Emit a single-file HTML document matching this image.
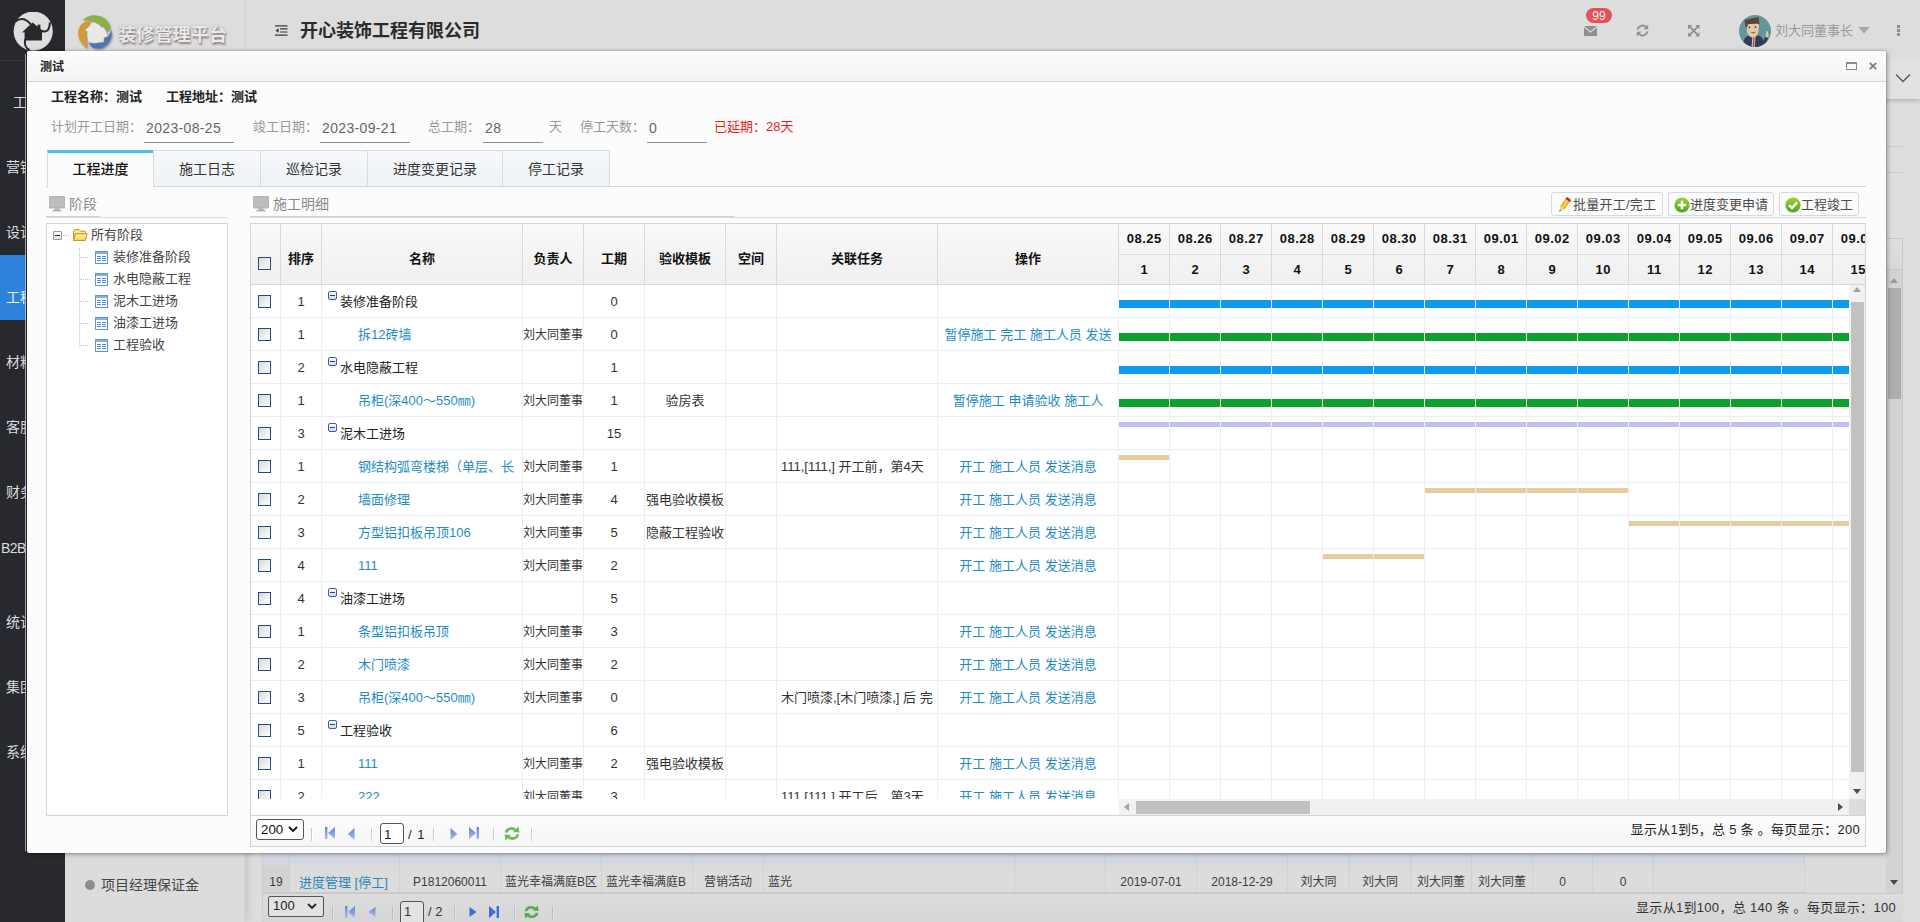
<!DOCTYPE html>
<html lang="zh-CN"><head><meta charset="utf-8"><title>装修管理平台</title>
<style>
*{box-sizing:border-box;margin:0;padding:0}
html,body{width:1920px;height:922px;overflow:hidden}
body{font-family:"Liberation Sans","Noto Sans CJK SC",sans-serif;font-size:13px;color:#333;background:#dddddd;position:relative}
a{text-decoration:none;color:#1e8cc4;cursor:pointer}
.abs{position:absolute}

/* ---------- underlying (dimmed) page ---------- */
#side1{z-index:3;position:absolute;left:0;top:0;width:65px;height:922px;background:#28292e;color:#dcdcde;font-size:14px}
#side1 .logo{position:absolute;left:0;top:0;width:65px;height:61px;border-bottom:1px solid #36373c}
#side1 .it{position:absolute;left:0;width:65px;height:65px;line-height:65px;text-align:left;padding-left:6px;white-space:nowrap;overflow:hidden}
#side1 .it.act{background:#2d83dc;color:#e8f0fa}
#side2{position:absolute;left:65px;top:0;width:180px;height:922px;background:#dcdcdc;border-right:1px solid #d6d6d6;box-shadow:2px 0 8px rgba(0,0,0,.12)}
#hdr{z-index:2;position:absolute;left:65px;top:0;width:1855px;height:60px;background:#dddddd}
#hdr .sep{position:absolute;left:180px;top:0;width:1px;height:60px;background:#d2d2d2}
#hdr .co{position:absolute;left:235px;top:17px;font-size:18px;font-weight:bold;color:#2b2b2b;line-height:28px;white-space:nowrap}
#hdr .brand{position:absolute;left:53px;top:19px;font-size:18px;font-weight:bold;color:#e9e9e9;letter-spacing:.2px;line-height:32px;white-space:nowrap;text-shadow:1px 2px 2px #8d8080,0 0 2px #a79d9d}
#tabsbar{z-index:1;position:absolute;left:245px;top:60px;width:1675px;height:39px;background:#e1e1e1;box-shadow:0 2px 4px rgba(0,0,0,.18)}
#under{position:absolute;left:245px;top:99px;width:1675px;height:823px;background:#dddddd}

/* ---------- modal ---------- */
#modal{z-index:10;position:absolute;left:27px;top:51px;width:1859px;height:802px;background:#fcfcfc;border-radius:2px;box-shadow:0 0 1px rgba(0,0,0,.55),1px 1px 5px rgba(0,0,0,.38)}
#modal .tb{position:absolute;left:0;top:0;width:1859px;height:31px;border-bottom:1px solid #d6d6d6;background:linear-gradient(#fdfdfd,#f3f3f3);border-radius:2px 2px 0 0}
#modal .tb .tt{position:absolute;left:13px;top:8px;font-size:12px;font-weight:bold;color:#222;line-height:16px}

.lbl{position:absolute;font-size:13px;color:#999;line-height:18px;white-space:nowrap}
.inp{position:absolute;font-size:14px;color:#666;line-height:18px;border-bottom:1px solid #8f8f8f;height:27px;padding:3px 0 0 2px;white-space:nowrap;letter-spacing:.34px}
.bold13{position:absolute;font-size:13px;font-weight:bold;color:#222;line-height:18px;white-space:nowrap}

/* tabs */
.tab{position:absolute;top:99px;height:37px;border:1px solid #d3dde4;border-bottom:1px solid #c9dbe7;background:linear-gradient(#f7f9fb,#edf2f5);font-size:14px;color:#333;text-align:center;line-height:36px}
.tab.on{background:#fcfcfc;border-top:3px solid #4fc0ee;border-bottom:0;line-height:33px;font-weight:500;color:#111}
.tabline{position:absolute;left:19px;top:135px;width:1820px;height:1px;background:#c9dbe7}

.sec{position:absolute;font-size:14px;color:#8a8a8a;line-height:20px;white-space:nowrap}
.hl1{position:absolute;height:1px;background:#dcdcdc}
.hl2{position:absolute;height:2px;background:#d0d0d0}

/* tree */
#tree{position:absolute;left:19px;top:172px;width:182px;height:593px;border:1px solid #d4d4d4;background:#fff}
#tree .n{position:absolute;font-size:13px;color:#444;line-height:18px;white-space:nowrap}

/* toolbar buttons */
.btn{position:absolute;top:141px;height:24px;border:1px solid #cfdbe4;border-radius:3px;background:#fbfbfb;font-size:13px;color:#4a4a4a;line-height:23px;white-space:nowrap}
.btn svg{position:absolute;top:3px}
.btn span{position:absolute;top:0}

/* grid */
#grid{position:absolute;left:223px;top:172px;width:1616px;height:624px;border:1px solid #d4d4d4;background:#fff;overflow:hidden}
#gh{position:absolute;left:0;top:0;width:1614px;height:61px;background:linear-gradient(#f9f9f9,#efefef);border-bottom:1px solid #d6d6d6}
#gh .h{position:absolute;top:0;height:60px;border-right:1px solid #d9d9d9;font-weight:bold;font-size:13px;color:#111;text-align:center;line-height:70px;white-space:nowrap}
#gh .gh1,#gh .gh2{position:absolute;left:868px;width:800px;height:30px;white-space:nowrap;font-size:0}
#gh .gh1{top:0;border-bottom:1px solid #dcdcdc;height:31px}
#gh .gh2{top:31px}
#gh .d{display:inline-block;width:51px;height:30px;border-right:1px solid #d9d9d9;font-size:13px;font-weight:bold;color:#111;text-align:center;line-height:30px;vertical-align:top;letter-spacing:.5px;padding-left:.5px}
#lb{position:absolute;left:0;top:61px;width:868px;height:514px;overflow:hidden}
#rb{position:absolute;left:868px;top:61px;width:730px;height:514px;overflow:hidden}
.r{position:absolute;left:0;width:868px;height:33px}
.c{position:absolute;top:0;height:33px;border-right:1px solid #eeeef0;border-bottom:1px solid #e8eef9;font-size:13px;color:#333;line-height:33px;text-align:center;white-space:nowrap;overflow:hidden}
.c0{left:0;width:30px}.c1{left:30px;width:41px}.c2{left:71px;width:201px;text-align:left}.c3{left:272px;width:61px;font-size:12px;line-height:35px}.c4{left:333px;width:61px}.c5{left:394px;width:81px}.c6{left:475px;width:51px}.c7{left:526px;width:161px;text-align:left;padding-left:4px}
.tk{display:block;width:152px;height:33px;overflow:hidden;white-space:nowrap}.c8{left:687px;width:181px}

.c2 .gn{position:absolute;left:18px;top:0;font-size:13px;color:#222}
.c2 .cn{position:absolute;left:36px;top:0;font-size:13px}
.exp{position:absolute;left:6px;top:6px;width:9px;height:9px;border:1px solid #3c5fa0;border-radius:2px;background:linear-gradient(#fff,#cfdcf3)}
.exp:after{content:"";position:absolute;left:1px;top:3px;width:5px;height:1px;background:#27408b}
.ck{position:absolute;left:7px;top:10px;width:13px;height:13px;border:1px solid #1f4c8f;background:linear-gradient(135deg,#d9d9d4,#fff)}
.grw{position:absolute;left:0;width:800px;height:33px;white-space:nowrap;font-size:0}
.grw .d{display:inline-block;position:relative;width:51px;height:33px;border-right:1px solid #eeeef0;border-bottom:1px solid #e8eef9;vertical-align:top}
.bar{position:absolute;left:0;width:50px;display:block}
.bar.b{top:15px;height:8px;background:#0e9aef}
.bar.g{top:15px;height:8px;background:#0aa12e}
.bar.p{top:5px;height:5px;background:#c1bef1}
.bar.t{top:5px;height:5px;background:#e6cd9f}

/* scrollbars */
.vsb{position:absolute;background:#f1f1f1}
.thumb{position:absolute;background:#c1c1c1}
.arr{position:absolute;width:0;height:0;border:4px solid transparent}

/* pager */
#pager{position:absolute;left:223px;top:764px;width:1616px;height:32px;border:1px solid #d4d4d4;background:linear-gradient(#fdfdfd,#f5f5f5);font-size:13px;color:#222}
#pager .sel{position:absolute;left:5px;top:3px;width:48px;height:21px;border:1px solid #555;border-radius:3px;background:#fff;font-size:13.33px;line-height:19px;padding-left:4px;color:#111}
#pager .ps{position:absolute;top:12px;width:1px;height:13px;background:#ccc;border-right:1px solid #fff;box-sizing:content-box}
#pager .pin{position:absolute;left:129px;top:7px;width:24px;height:21px;border:1px solid #555;border-radius:3px;background:#fff;font-size:13.33px;line-height:22px;padding-left:3px;color:#222}
#pager .info{position:absolute;right:5px;top:4px;line-height:20px;font-size:13px;color:#222;white-space:nowrap;letter-spacing:.28px}

/* header icons */
#hdr .un{position:absolute;left:1710px;top:21px;font-size:13px;color:#9a9a9a;line-height:20px;white-space:nowrap}
#hdr .badge{position:absolute;left:1521px;top:8px;width:26px;height:15px;border-radius:8px;background:#de5459;color:#f3eaea;font-size:12px;line-height:16px;text-align:center}
/* tree icons */
#tree svg{position:absolute}
#tree .vd{position:absolute;left:32px;top:24px;width:0;height:98px;border-left:1px dotted #c4c4c4}
#tree .hd{position:absolute;left:33px;width:10px;height:0;border-top:1px dotted #c4c4c4}
#pager svg{position:absolute}

/* underlying grid strip */
#ugrid{position:absolute;left:263px;top:853px;width:1640px;height:69px;background:#dcdcdc;border-left:1px solid #cdcdcd;margin-left:-1px;box-sizing:content-box}
#ugrid .uband{position:absolute;left:0;top:0;width:1542px;height:12px;background:#d3d8e3}
#ugrid .ub{position:absolute;top:0;height:12px;border-right:1px solid #c9cedb}
#ugrid .urow{position:absolute;left:0;top:12px;width:1542px;height:28px;border-bottom:1px solid #cbcbcb}
#ugrid .uc{position:absolute;top:0;height:27px;border-right:1px solid #d0d0d0;font-size:12px;color:#3c3c3c;line-height:35px;text-align:center;white-space:nowrap;overflow:hidden}
#ugrid .uc.rn{background:#d3d3d3}
#ugrid .uc.ul{text-align:left;padding-left:4px}
#ugrid .uc.u13{font-size:13px;padding-left:9px}
#ugrid .uc a{color:#2a86bd}
#upager{position:absolute;left:0;top:39px;width:1640px;height:30px;border-top:1px solid #c9c9c9;background:linear-gradient(#dddddd,#d6d6d6);font-size:13px;color:#333}
#upager svg{position:absolute}
#upager .sel{position:absolute;border:1px solid #555;border-radius:2px;background:#e2e2e2;font-size:13px;line-height:18px;padding-left:4px;color:#222}
#upager .pin{position:absolute;border:1px solid #555;border-radius:3px;background:#e2e2e2;font-size:13px;line-height:20px;padding-left:3px;color:#333}
#upager .ps{position:absolute;top:12px;width:1px;height:13px;background:#bcbcbc;border-right:1px solid #e6e6e6;box-sizing:content-box}
#upager .info{position:absolute;line-height:20px;font-size:13px;color:#333;white-space:nowrap;letter-spacing:.3px}

</style></head>
<body>
<svg width="0" height="0" style="position:absolute">
 <defs>
  <linearGradient id="fg" x1="0" y1="0" x2="0" y2="1"><stop offset="0" stop-color="#fff3b0"/><stop offset="1" stop-color="#f2cf4f"/></linearGradient>
  <linearGradient id="gg" x1="0" y1="0" x2="0" y2="1"><stop offset="0" stop-color="#9ad62c"/><stop offset="1" stop-color="#4da51f"/></linearGradient>
  <linearGradient id="pb" x1="0" y1="0" x2="0" y2="1"><stop offset="0" stop-color="#5f86d2"/><stop offset="1" stop-color="#a9bde6"/></linearGradient>
  <symbol id="ti" viewBox="0 0 13 13"><rect x=".5" y=".5" width="12" height="12" fill="#fff" stroke="#5b93dd"/><rect x="1" y="1" width="11" height="2" fill="#82b0ec"/><path d="M2 5.5h4M7 5.5h4M2 7.5h4M7 7.5h4M2 9.5h4M7 9.5h4" stroke="#4f8be0" stroke-width="1" fill="none"/></symbol>
  <symbol id="mon" viewBox="0 0 16 16"><rect x="0" y="0" width="16" height="12.5" rx="1" fill="#b4b4b4"/><rect x="1" y="1" width="14" height="10" fill="#bdbdbd"/><rect x="5.5" y="12.5" width="5" height="1.5" fill="#a5a5a5"/><rect x="3.5" y="14" width="9" height="1.5" fill="#b3b3b3"/><rect x="7" y="13.2" width="2" height="1" fill="#b9c49a"/></symbol>
 </defs>
</svg>
<!-- ======= dimmed underlying page ======= -->
<div id="under">
  <div class="abs" style="left:1641px;top:47px;width:17px;height:1px;background:#c3cdd4"></div>
  <div class="abs" style="left:1641px;top:73px;width:17px;height:1px;background:#c3cdd4"></div>
  <div class="abs" style="left:1641px;top:139px;width:17px;height:655px;background:#d3d3d3;border-right:1px solid #c6c6c6"></div>
  <div class="abs" style="left:1641px;top:139px;width:17px;height:32px;background:linear-gradient(#dfdfdf,#d8d8d8);border:1px solid #c8c8c8;border-left:0"></div>
  <div class="arr" style="left:1645px;top:179px;border-bottom:5px solid #9a9a9a;border-top:0"></div>
  <div class="abs" style="left:1643px;top:189px;width:13px;height:111px;background:#adadad"></div>
</div>
<div id="ugrid">
  <div class="uband"><div class="ub" style="left:0px;width:27px"></div><div class="ub" style="left:27px;width:110px"></div><div class="ub" style="left:137px;width:101px"></div><div class="ub" style="left:238px;width:101px"></div><div class="ub" style="left:339px;width:91px"></div><div class="ub" style="left:430px;width:71px"></div><div class="ub" style="left:501px;width:251px"></div><div class="ub" style="left:752px;width:91px"></div><div class="ub" style="left:843px;width:91px"></div><div class="ub" style="left:934px;width:91px"></div><div class="ub" style="left:1025px;width:62px"></div><div class="ub" style="left:1087px;width:61px"></div><div class="ub" style="left:1148px;width:61px"></div><div class="ub" style="left:1209px;width:61px"></div><div class="ub" style="left:1270px;width:60px"></div><div class="ub" style="left:1330px;width:61px"></div><div class="ub" style="left:1391px;width:151px"></div></div>
  <div class="urow"><div class="uc rn" style="left:0px;width:27px">19</div><div class="uc ul u13" style="left:27px;width:110px"><a>进度管理 [停工]</a></div><div class="uc" style="left:137px;width:101px">P1812060011</div><div class="uc ul" style="left:238px;width:101px">蓝光幸福满庭B区</div><div class="uc ul" style="left:339px;width:91px">蓝光幸福满庭B</div><div class="uc" style="left:430px;width:71px">营销活动</div><div class="uc ul" style="left:501px;width:251px">蓝光</div><div class="uc" style="left:752px;width:91px"></div><div class="uc" style="left:843px;width:91px">2019-07-01</div><div class="uc" style="left:934px;width:91px">2018-12-29</div><div class="uc" style="left:1025px;width:62px">刘大同</div><div class="uc" style="left:1087px;width:61px">刘大同</div><div class="uc" style="left:1148px;width:61px">刘大同董</div><div class="uc" style="left:1209px;width:61px">刘大同董</div><div class="uc" style="left:1270px;width:60px">0</div><div class="uc" style="left:1330px;width:61px">0</div><div class="uc" style="left:1391px;width:151px"></div></div>
  <div class="abs" style="left:1623px;top:0;width:17px;height:40px;background:#d3d3d3;border-right:1px solid #c6c6c6"><div class="arr" style="left:4px;top:27px;border-top:5px solid #4a4a4a;border-bottom:0"></div></div>
  <div id="upager" style="top:40px;height:29px">
    <div class="sel" style="left:5px;top:2px;width:56px;height:21px">100<svg style="right:6px;top:6px" width="10" height="7" viewBox="0 0 10 7"><path d="M1 1 L5 5 L9 1" fill="none" stroke="#222" stroke-width="1.8"/></svg></div>
    <div class="ps" style="left:69px"></div>
    <svg style="left:81px;top:12px" width="12" height="12" viewBox="0 0 12 12"><rect x="1" y="0" width="2.4" height="12" fill="url(#pb)"/><path d="M11 0 L11 12 L4 6 Z" fill="url(#pb)"/></svg>
    <svg style="left:104px;top:13px" width="9" height="10" viewBox="0 0 9 10"><path d="M8.5 0 L8.5 10 L1.5 5 Z" fill="url(#pb)"/></svg>
    <div class="ps" style="left:129px"></div>
    <div class="pin" style="left:137px;top:7px;width:24px;height:24px">1</div>
    <div class="abs" style="left:165px;top:8px;line-height:20px;font-size:13px">/ 2</div>
    <div class="ps" style="left:191px"></div>
    <svg style="left:206px;top:13px" width="9" height="10" viewBox="0 0 9 10"><path d="M.5 0 L.5 10 L7.5 5 Z" fill="#3c6fd6"/></svg>
    <svg style="left:225px;top:12px" width="12" height="12" viewBox="0 0 12 12"><path d="M1 0 L1 12 L8 6 Z" fill="#3c6fd6"/><rect x="8.6" y="0" width="2.4" height="12" fill="#3c6fd6"/></svg>
    <div class="ps" style="left:251px"></div>
    <svg style="left:260px;top:10px" width="17" height="16" viewBox="0 0 17 16"><g fill="none" stroke="#5aa653" stroke-width="2.6"><path d="M3 7.2 C3.5 3.2 9 2.2 11.8 4.6"/><path d="M14 8.8 C13.5 12.8 8 13.8 5.2 11.4"/></g><path d="M9.6 6.6 L15.6 7 L14.6 1.4 Z" fill="#5aa653"/><path d="M7.4 9.4 L1.4 9 L2.4 14.6 Z" fill="#5aa653"/></svg>
    <div class="ps" style="left:289px"></div>
    <div class="info" style="right:7px;top:4px">显示从1到100，总 140 条 。每页显示：100</div>
  </div>
</div>
<div id="tabsbar">
  <svg class="abs" style="left:1650px;top:13px" width="16" height="10" viewBox="0 0 16 10"><path d="M1 1.5 L8 8.5 L15 1.5" fill="none" stroke="#3d5a78" stroke-width="1.3"/></svg>
</div>
<div id="hdr">
  <div class="sep"></div>
  <!-- colour swirl logo -->
  <svg class="abs" style="left:10px;top:12px" width="42" height="42" viewBox="0 0 42 42">
    <defs><filter id="ls" x="-20%" y="-20%" width="140%" height="140%"><feDropShadow dx="1" dy="1.2" stdDeviation=".9" flood-color="#6f5d5d" flood-opacity=".75"/></filter></defs>
    <g filter="url(#ls)">
      <path d="M7.6 8.4 Q13 2.6 21.5 3.4 Q31.5 4.6 34.6 13.6 Q35.4 16.4 34.4 18.6 L31.2 18.4 L29 14.8 L27.2 15.2 L24.4 12.4 L20.2 10 L17.4 9.2 Q12 7.4 7.6 8.4 Z" fill="#8db13f"/>
      <path d="M36.6 18.2 Q37.8 26.6 32.2 32.4 Q25.6 38.6 17.4 35.6 Q14.8 34.2 14.2 30.8 Q18.6 32.6 23 31 L29 30.6 L29.4 26.2 L33 24.4 Z" fill="#4a78b5"/>
      <path d="M12.6 36.2 Q4.4 31.4 3.2 22.4 Q2.6 14.4 9.2 10.2 Q13 9.2 15.8 10.6 L13.6 14 L8.8 18.2 L11.4 19.6 Q10.4 27.6 12.6 36.2 Z" fill="#d29a36"/>
      <path d="M19.8 10.6 L24 13 L26.8 15.8 L28.6 15.4 L30.6 18.8 L32.4 24 L28.8 25.8 L28.4 30 L22.8 30.4 Q17.6 32 13.6 29.6 Q11.8 24 12.6 19.2 L9.8 18.2 L14.2 14.4 L16.4 11 Z" fill="#e9e9e9"/>
    </g>
  </svg>
  <div class="brand">装修管理平台</div>
  <!-- fold icon -->
  <svg class="abs" style="left:210px;top:25px" width="13" height="11" viewBox="0 0 13 11"><path d="M0 .8h12.5M5 3.9h7.5M5 7h7.5M0 10.1h12.5" stroke="#3a3a3a" stroke-width="1.2" fill="none"/><path d="M3.6 3.2 L3.6 7.8 L.4 5.5 Z" fill="#3a3a3a"/></svg>
  <div class="co">开心装饰工程有限公司</div>
  <!-- mail -->
  <svg class="abs" style="left:1519px;top:26px" width="13" height="10" viewBox="0 0 13 10"><path d="M0 0 L13 0 L6.5 5.2 Z" fill="#8f8f8f"/><path d="M0 1.6 L6.5 6.8 L13 1.6 L13 10 L0 10 Z" fill="#8f8f8f"/></svg>
  <div class="badge">99</div>
  <!-- refresh -->
  <svg class="abs" style="left:1571px;top:24px" width="13" height="13" viewBox="0 0 13 13"><g fill="none" stroke="#8f8f8f" stroke-width="1.9"><path d="M1.6 5.6 A5 5 0 0 1 10 3"/><path d="M11.4 7.4 A5 5 0 0 1 3 10"/></g><path d="M12.2 .6 L12.2 5.2 L7.6 5.2 Z" fill="#8f8f8f"/><path d="M.8 12.4 L.8 7.8 L5.4 7.8 Z" fill="#8f8f8f"/></svg>
  <!-- fullscreen -->
  <svg class="abs" style="left:1623px;top:25px" width="11.5" height="11.5" viewBox="0 0 12 12"><path d="M2 2 L10 10 M10 2 L2 10" stroke="#8f8f8f" stroke-width="1.8" fill="none"/><path d="M0 0h4.4L0 4.4zM12 0v4.4L7.6 0zM0 12V7.6L4.4 12zM12 12H7.6L12 7.6z" fill="#8f8f8f"/></svg>
  <!-- avatar -->
  <svg class="abs" style="left:1674px;top:15px" width="32" height="32" viewBox="0 0 32 32">
    <defs><clipPath id="av"><circle cx="16" cy="16" r="16"/></clipPath></defs>
    <g clip-path="url(#av)">
      <rect width="32" height="32" fill="#63979a"/>
      <path d="M3 32 L5 25 Q6 21 11 20.5 L19 20.5 Q23 21 24 25 L25 32 Z" fill="#353d54"/>
      <path d="M13.5 20.5 L16.5 20.5 L15.8 32 L12.6 32 Z" fill="#d8d2c8"/>
      <path d="M14.4 21.5 L15.6 21.5 L15.2 32 L13.6 32 Z" fill="#b4453f"/>
      <path d="M23 27 L27.5 21 L29.5 22.5 L26 30 Z" fill="#353d54"/>
      <path d="M26.6 21.8 L27.2 16 L28.8 16.2 L29.6 20 L29.4 23 Z" fill="#ddc3a2"/>
      <path d="M7.5 9 L8 17 Q10 22.5 14 22.5 Q18.5 22 19.5 16 L20 8.5 Z" fill="#e0c9a8"/>
      <path d="M5.5 5 L19.5 2 L20.5 9.5 L17.5 8.5 L9 9.2 L8 12.5 L6.5 12 Z" fill="#5a4335"/>
      <rect x="9.6" y="11.6" width="1.6" height="1.8" rx=".8" fill="#3a2f2a"/><rect x="15.6" y="11.2" width="1.6" height="1.8" rx=".8" fill="#3a2f2a"/>
      <path d="M11.5 17.2 Q14.5 19.4 17.2 16.6 Q14.5 17.6 11.5 17.2Z" fill="#8c3b3b"/>
    </g>
  </svg>
  <div class="un">刘大同董事长</div>
  <svg class="abs" style="left:1793px;top:27px" width="12" height="7" viewBox="0 0 12 7"><path d="M0 0 L12 0 L6 6.4 Z" fill="#a8a8a8"/></svg>
  <svg class="abs" style="left:1832px;top:25px" width="3" height="11" viewBox="0 0 3 11"><rect x="0" y="0" width="3" height="3" fill="#8f8f8f"/><rect x="0" y="4" width="3" height="3" fill="#8f8f8f"/><rect x="0" y="8" width="3" height="3" fill="#8f8f8f"/></svg>
</div>
<div id="side2">
  <div class="abs" style="left:20px;top:880px;width:10px;height:10px;border-radius:5px;background:#8c8e93"></div>
  <div class="abs" style="left:36px;top:875px;font-size:14px;color:#464646;line-height:20px;white-space:nowrap">项目经理保证金</div>
</div>
<div id="side1">
  <div class="logo">
    <svg class="abs" style="left:13px;top:12px" width="41" height="41" viewBox="0 0 41 41">
      <circle cx="20.2" cy="19.2" r="19.6" fill="#dedede"/>
      <path d="M19.6 10.6 L31.6 20.2 L29 20.2 L29 28.6 L11.6 28.6 L11.6 20.2 L8.8 20.4 Z" fill="#28292e"/>
      <rect x="24.6" y="12.6" width="2.8" height="4.6" fill="#28292e"/>
      <g fill="none" stroke="#28292e" stroke-width="2">
        <path d="M2.4 9.4 Q10.4 3.4 17.8 12.4"/>
        <path d="M28.6 18.8 Q36.6 21.8 36.8 10.6"/>
        <path d="M12.2 27 Q10.6 35.4 16.6 38"/>
      </g>
    </svg>
  </div>
  <div class="it" style="top:70px;padding-left:13px">工作台</div>
  <div class="it" style="top:135px">营销管理</div>
  <div class="it" style="top:200px">设计管理</div>
  <div class="it act" style="top:255px;height:65px;padding-top:10px">工程管理</div>
  <div class="it" style="top:330px">材料管理</div>
  <div class="it" style="top:395px">客服管理</div>
  <div class="it" style="top:460px">财务管理</div>
  <div class="it" style="top:516px;text-align:left;padding-left:1px;font-size:14px;letter-spacing:-.6px">B2B 平台</div>
  <div class="it" style="top:590px">统计分析</div>
  <div class="it" style="top:655px">集团管理</div>
  <div class="it" style="top:720px">系统管理</div>
</div>

<!-- ======= modal window ======= -->
<div id="modal">
  <div class="abs" style="left:-2px;top:3px;width:1px;height:797px;background:rgba(200,200,200,.75)"></div><div class="abs" style="left:-1px;top:1px;width:1px;height:800px;background:#26262a"></div>
  <div class="tb"><div class="tt">测试</div><svg class="abs" style="left:1819px;top:11px" width="12" height="9" viewBox="0 0 12 9"><rect x=".5" y=".5" width="10" height="7" fill="none" stroke="#8c8c8c" stroke-width="1"/><rect x="0" y="0" width="11" height="2" fill="#8c8c8c"/></svg><svg class="abs" style="left:1842px;top:11px" width="8" height="8" viewBox="0 0 8 8"><path d="M.8 .8 L7.2 7.2 M7.2 .8 L.8 7.2" stroke="#7c7c7c" stroke-width="1.7" fill="none"/></svg></div>

  <div class="bold13" style="left:24px;top:37px">工程名称：测试</div>
  <div class="bold13" style="left:139px;top:37px">工程地址：测试</div>

  <div class="lbl" style="left:24px;top:67px">计划开工日期：</div>
  <div class="inp" style="left:117px;top:65px;width:90px">2023-08-25</div>
  <div class="lbl" style="left:226px;top:67px">竣工日期：</div>
  <div class="inp" style="left:293px;top:65px;width:90px">2023-09-21</div>
  <div class="lbl" style="left:401px;top:67px">总工期：</div>
  <div class="inp" style="left:456px;top:65px;width:60px">28</div>
  <div class="lbl" style="left:522px;top:67px">天</div>
  <div class="lbl" style="left:553px;top:67px">停工天数：</div>
  <div class="inp" style="left:620px;top:65px;width:60px">0</div>
  <div class="abs" style="left:687px;top:67px;font-size:13px;color:#f9161b;line-height:18px;white-space:nowrap">已延期：28天</div>

  <div class="tabline"></div>
  <div class="tab on" style="left:20px;width:107px">工程进度</div>
  <div class="tab" style="left:126px;width:108px">施工日志</div>
  <div class="tab" style="left:233px;width:108px">巡检记录</div>
  <div class="tab" style="left:340px;width:136px">进度变更记录</div>
  <div class="tab" style="left:475px;width:108px">停工记录</div>

  <!-- section: 阶段 -->
  <svg class="abs" style="left:22px;top:145px" width="16" height="16"><use href="#mon"/></svg>
  <div class="sec" style="left:42px;top:143px">阶段</div>
  <div class="hl2" style="left:19px;top:165px;width:54px"></div>
  <div class="hl1" style="left:19px;top:166px;width:181px"></div>

  <div id="tree">
    <div class="abs" style="left:6px;top:7px;width:9px;height:9px;border:1px solid #9a9a9a;border-radius:1px;background:linear-gradient(#fff,#e4e4e4)"></div>
    <div class="abs" style="left:8px;top:11px;width:5px;height:1px;background:#222"></div>
    <div class="abs" style="left:16px;top:11px;width:6px;height:0;border-top:1px dotted #bdbdbd"></div>
    <svg style="left:25px;top:4px" width="16" height="14" viewBox="0 0 16 14"><path d="M1.5 4 Q1.5 1.5 4 1.5 L7 1.5 L8.5 3.2 L12.5 3.2 Q13.7 3.2 13.7 4.4 L13.7 6 L3.5 6 L1.5 11 Z" fill="#f8e59a" stroke="#c8961b" stroke-width="1"/><path d="M3.6 5.8 L15.2 5.8 L13.4 12.5 L1.5 12.5 Z" fill="url(#fg)" stroke="#c8961b" stroke-width="1" stroke-linejoin="round"/></svg>
    <div class="n" style="left:44px;top:2px">所有阶段</div>
    <div class="vd"></div>
    <div class="hd" style="top:33px"></div><div class="hd" style="top:55px"></div><div class="hd" style="top:77px"></div><div class="hd" style="top:99px"></div><div class="hd" style="top:121px"></div>
    <svg style="left:48px;top:27px" width="13" height="13"><use href="#ti"/></svg>
    <svg style="left:48px;top:49px" width="13" height="13"><use href="#ti"/></svg>
    <svg style="left:48px;top:71px" width="13" height="13"><use href="#ti"/></svg>
    <svg style="left:48px;top:93px" width="13" height="13"><use href="#ti"/></svg>
    <svg style="left:48px;top:115px" width="13" height="13"><use href="#ti"/></svg>
    <div class="n" style="left:66px;top:24px">装修准备阶段</div>
    <div class="n" style="left:66px;top:46px">水电隐蔽工程</div>
    <div class="n" style="left:66px;top:68px">泥木工进场</div>
    <div class="n" style="left:66px;top:90px">油漆工进场</div>
    <div class="n" style="left:66px;top:112px">工程验收</div>
  </div>

  <!-- section: 施工明细 -->
  <svg class="abs" style="left:226px;top:145px" width="16" height="16"><use href="#mon"/></svg>
  <div class="sec" style="left:246px;top:143px">施工明细</div>
  <div class="hl2" style="left:223px;top:165px;width:485px"></div>
  <div class="hl1" style="left:223px;top:166px;width:1616px"></div>

  <div class="btn" style="left:1524px;width:112px"><svg style="left:5px;top:4px" width="14" height="16" viewBox="0 0 14 16"><g transform="rotate(36 7 8) translate(7 8) scale(1.12 1.04) translate(-7 -8)"><rect x="4.8" y="0" width="4.8" height="2.8" rx=".8" fill="#c9252d"/><rect x="4.8" y="2.6" width="4.8" height="8.6" fill="#efb02b"/><rect x="6.3" y="2.6" width="1.7" height="8.6" fill="#f8d264"/><path d="M4.8 11.2 L9.6 11.2 L7.2 15.6 Z" fill="#e8cfa2"/><path d="M6.5 14.2 L7.9 14.2 L7.2 15.8 Z" fill="#2b2b2b"/></g></svg><span style="left:21px;letter-spacing:.25px">批量开工/完工</span></div>
  <div class="btn" style="left:1641px;width:106px"><svg style="left:5px;top:4px" width="16" height="16" viewBox="0 0 16 16"><circle cx="8" cy="8" r="7.6" fill="url(#gg)"/><path d="M8 3.8v8.4M3.8 8h8.4" stroke="#fff" stroke-width="2.4" fill="none"/></svg><span style="left:21px">进度变更申请</span></div>
  <div class="btn" style="left:1752px;width:80px"><svg style="left:5px;top:4px" width="16" height="16" viewBox="0 0 16 16"><circle cx="8" cy="8" r="7.6" fill="url(#gg)"/><path d="M4 8.2 L7 11 L12 5.4" stroke="#fff" stroke-width="2.4" fill="none"/></svg><span style="left:21px">工程竣工</span></div>

  <div id="grid">
    <div id="gh">
      <div class="h" style="left:0;width:30px"><span class="ck" style="top:33px"></span></div>
      <div class="h" style="left:30px;width:41px">排序</div>
      <div class="h" style="left:71px;width:201px">名称</div>
      <div class="h" style="left:272px;width:61px">负责人</div>
      <div class="h" style="left:333px;width:61px">工期</div>
      <div class="h" style="left:394px;width:81px">验收模板</div>
      <div class="h" style="left:475px;width:51px">空间</div>
      <div class="h" style="left:526px;width:161px">关联任务</div>
      <div class="h" style="left:687px;width:181px">操作</div>
      <div class="gh1"><div class="d">08.25</div><div class="d">08.26</div><div class="d">08.27</div><div class="d">08.28</div><div class="d">08.29</div><div class="d">08.30</div><div class="d">08.31</div><div class="d">09.01</div><div class="d">09.02</div><div class="d">09.03</div><div class="d">09.04</div><div class="d">09.05</div><div class="d">09.06</div><div class="d">09.07</div><div class="d">09.08</div></div><div class="gh2"><div class="d">1</div><div class="d">2</div><div class="d">3</div><div class="d">4</div><div class="d">5</div><div class="d">6</div><div class="d">7</div><div class="d">8</div><div class="d">9</div><div class="d">10</div><div class="d">11</div><div class="d">12</div><div class="d">13</div><div class="d">14</div><div class="d">15</div></div>
    </div>
    <div id="lb">
<div class="r" style="top:0px"><div class="c c0"><span class="ck"></span></div><div class="c c1">1</div><div class="c c2"><span class="exp"></span><span class="gn">装修准备阶段</span></div><div class="c c3"></div><div class="c c4">0</div><div class="c c5"></div><div class="c c6"></div><div class="c c7"><span class="tk"></span></div><div class="c c8"></div></div>
<div class="r" style="top:33px"><div class="c c0"><span class="ck"></span></div><div class="c c1">1</div><div class="c c2"><a class="cn">拆12砖墙</a></div><div class="c c3">刘大同董事</div><div class="c c4">0</div><div class="c c5"></div><div class="c c6"></div><div class="c c7"><span class="tk"></span></div><div class="c c8"><a>暂停施工</a> <a>完工</a> <a>施工人员</a> <a>发送</a></div></div>
<div class="r" style="top:66px"><div class="c c0"><span class="ck"></span></div><div class="c c1">2</div><div class="c c2"><span class="exp"></span><span class="gn">水电隐蔽工程</span></div><div class="c c3"></div><div class="c c4">1</div><div class="c c5"></div><div class="c c6"></div><div class="c c7"><span class="tk"></span></div><div class="c c8"></div></div>
<div class="r" style="top:99px"><div class="c c0"><span class="ck"></span></div><div class="c c1">1</div><div class="c c2"><a class="cn">吊柜(深400～550㎜)</a></div><div class="c c3">刘大同董事</div><div class="c c4">1</div><div class="c c5">验房表</div><div class="c c6"></div><div class="c c7"><span class="tk"></span></div><div class="c c8"><a>暂停施工</a> <a>申请验收</a> <a>施工人</a></div></div>
<div class="r" style="top:132px"><div class="c c0"><span class="ck"></span></div><div class="c c1">3</div><div class="c c2"><span class="exp"></span><span class="gn">泥木工进场</span></div><div class="c c3"></div><div class="c c4">15</div><div class="c c5"></div><div class="c c6"></div><div class="c c7"><span class="tk"></span></div><div class="c c8"></div></div>
<div class="r" style="top:165px"><div class="c c0"><span class="ck"></span></div><div class="c c1">1</div><div class="c c2"><a class="cn">钢结构弧弯楼梯（单层、长</a></div><div class="c c3">刘大同董事</div><div class="c c4">1</div><div class="c c5"></div><div class="c c6"></div><div class="c c7"><span class="tk">111,[111,] 开工前，第4天</span></div><div class="c c8"><a>开工</a> <a>施工人员</a> <a>发送消息</a></div></div>
<div class="r" style="top:198px"><div class="c c0"><span class="ck"></span></div><div class="c c1">2</div><div class="c c2"><a class="cn">墙面修理</a></div><div class="c c3">刘大同董事</div><div class="c c4">4</div><div class="c c5">强电验收模板</div><div class="c c6"></div><div class="c c7"><span class="tk"></span></div><div class="c c8"><a>开工</a> <a>施工人员</a> <a>发送消息</a></div></div>
<div class="r" style="top:231px"><div class="c c0"><span class="ck"></span></div><div class="c c1">3</div><div class="c c2"><a class="cn">方型铝扣板吊顶106</a></div><div class="c c3">刘大同董事</div><div class="c c4">5</div><div class="c c5">隐蔽工程验收</div><div class="c c6"></div><div class="c c7"><span class="tk"></span></div><div class="c c8"><a>开工</a> <a>施工人员</a> <a>发送消息</a></div></div>
<div class="r" style="top:264px"><div class="c c0"><span class="ck"></span></div><div class="c c1">4</div><div class="c c2"><a class="cn">111</a></div><div class="c c3">刘大同董事</div><div class="c c4">2</div><div class="c c5"></div><div class="c c6"></div><div class="c c7"><span class="tk"></span></div><div class="c c8"><a>开工</a> <a>施工人员</a> <a>发送消息</a></div></div>
<div class="r" style="top:297px"><div class="c c0"><span class="ck"></span></div><div class="c c1">4</div><div class="c c2"><span class="exp"></span><span class="gn">油漆工进场</span></div><div class="c c3"></div><div class="c c4">5</div><div class="c c5"></div><div class="c c6"></div><div class="c c7"><span class="tk"></span></div><div class="c c8"></div></div>
<div class="r" style="top:330px"><div class="c c0"><span class="ck"></span></div><div class="c c1">1</div><div class="c c2"><a class="cn">条型铝扣板吊顶</a></div><div class="c c3">刘大同董事</div><div class="c c4">3</div><div class="c c5"></div><div class="c c6"></div><div class="c c7"><span class="tk"></span></div><div class="c c8"><a>开工</a> <a>施工人员</a> <a>发送消息</a></div></div>
<div class="r" style="top:363px"><div class="c c0"><span class="ck"></span></div><div class="c c1">2</div><div class="c c2"><a class="cn">木门喷漆</a></div><div class="c c3">刘大同董事</div><div class="c c4">2</div><div class="c c5"></div><div class="c c6"></div><div class="c c7"><span class="tk"></span></div><div class="c c8"><a>开工</a> <a>施工人员</a> <a>发送消息</a></div></div>
<div class="r" style="top:396px"><div class="c c0"><span class="ck"></span></div><div class="c c1">3</div><div class="c c2"><a class="cn">吊柜(深400～550㎜)</a></div><div class="c c3">刘大同董事</div><div class="c c4">0</div><div class="c c5"></div><div class="c c6"></div><div class="c c7"><span class="tk">木门喷漆,[木门喷漆,] 后 完</span></div><div class="c c8"><a>开工</a> <a>施工人员</a> <a>发送消息</a></div></div>
<div class="r" style="top:429px"><div class="c c0"><span class="ck"></span></div><div class="c c1">5</div><div class="c c2"><span class="exp"></span><span class="gn">工程验收</span></div><div class="c c3"></div><div class="c c4">6</div><div class="c c5"></div><div class="c c6"></div><div class="c c7"><span class="tk"></span></div><div class="c c8"></div></div>
<div class="r" style="top:462px"><div class="c c0"><span class="ck"></span></div><div class="c c1">1</div><div class="c c2"><a class="cn">111</a></div><div class="c c3">刘大同董事</div><div class="c c4">2</div><div class="c c5">强电验收模板</div><div class="c c6"></div><div class="c c7"><span class="tk"></span></div><div class="c c8"><a>开工</a> <a>施工人员</a> <a>发送消息</a></div></div>
<div class="r" style="top:495px"><div class="c c0"><span class="ck"></span></div><div class="c c1">2</div><div class="c c2"><a class="cn">222</a></div><div class="c c3">刘大同董事</div><div class="c c4">3</div><div class="c c5"></div><div class="c c6"></div><div class="c c7"><span class="tk">111,[111,] 开工后，第3天</span></div><div class="c c8"><a>开工</a> <a>施工人员</a> <a>发送消息</a></div></div>
    </div>
    <div id="rb">
<div class="grw" style="top:0px"><div class="d"><i class="bar b"></i></div><div class="d"><i class="bar b"></i></div><div class="d"><i class="bar b"></i></div><div class="d"><i class="bar b"></i></div><div class="d"><i class="bar b"></i></div><div class="d"><i class="bar b"></i></div><div class="d"><i class="bar b"></i></div><div class="d"><i class="bar b"></i></div><div class="d"><i class="bar b"></i></div><div class="d"><i class="bar b"></i></div><div class="d"><i class="bar b"></i></div><div class="d"><i class="bar b"></i></div><div class="d"><i class="bar b"></i></div><div class="d"><i class="bar b"></i></div><div class="d"><i class="bar b"></i></div></div>
<div class="grw" style="top:33px"><div class="d"><i class="bar g"></i></div><div class="d"><i class="bar g"></i></div><div class="d"><i class="bar g"></i></div><div class="d"><i class="bar g"></i></div><div class="d"><i class="bar g"></i></div><div class="d"><i class="bar g"></i></div><div class="d"><i class="bar g"></i></div><div class="d"><i class="bar g"></i></div><div class="d"><i class="bar g"></i></div><div class="d"><i class="bar g"></i></div><div class="d"><i class="bar g"></i></div><div class="d"><i class="bar g"></i></div><div class="d"><i class="bar g"></i></div><div class="d"><i class="bar g"></i></div><div class="d"><i class="bar g"></i></div></div>
<div class="grw" style="top:66px"><div class="d"><i class="bar b"></i></div><div class="d"><i class="bar b"></i></div><div class="d"><i class="bar b"></i></div><div class="d"><i class="bar b"></i></div><div class="d"><i class="bar b"></i></div><div class="d"><i class="bar b"></i></div><div class="d"><i class="bar b"></i></div><div class="d"><i class="bar b"></i></div><div class="d"><i class="bar b"></i></div><div class="d"><i class="bar b"></i></div><div class="d"><i class="bar b"></i></div><div class="d"><i class="bar b"></i></div><div class="d"><i class="bar b"></i></div><div class="d"><i class="bar b"></i></div><div class="d"><i class="bar b"></i></div></div>
<div class="grw" style="top:99px"><div class="d"><i class="bar g"></i></div><div class="d"><i class="bar g"></i></div><div class="d"><i class="bar g"></i></div><div class="d"><i class="bar g"></i></div><div class="d"><i class="bar g"></i></div><div class="d"><i class="bar g"></i></div><div class="d"><i class="bar g"></i></div><div class="d"><i class="bar g"></i></div><div class="d"><i class="bar g"></i></div><div class="d"><i class="bar g"></i></div><div class="d"><i class="bar g"></i></div><div class="d"><i class="bar g"></i></div><div class="d"><i class="bar g"></i></div><div class="d"><i class="bar g"></i></div><div class="d"><i class="bar g"></i></div></div>
<div class="grw" style="top:132px"><div class="d"><i class="bar p"></i></div><div class="d"><i class="bar p"></i></div><div class="d"><i class="bar p"></i></div><div class="d"><i class="bar p"></i></div><div class="d"><i class="bar p"></i></div><div class="d"><i class="bar p"></i></div><div class="d"><i class="bar p"></i></div><div class="d"><i class="bar p"></i></div><div class="d"><i class="bar p"></i></div><div class="d"><i class="bar p"></i></div><div class="d"><i class="bar p"></i></div><div class="d"><i class="bar p"></i></div><div class="d"><i class="bar p"></i></div><div class="d"><i class="bar p"></i></div><div class="d"><i class="bar p"></i></div></div>
<div class="grw" style="top:165px"><div class="d"><i class="bar t"></i></div><div class="d"></div><div class="d"></div><div class="d"></div><div class="d"></div><div class="d"></div><div class="d"></div><div class="d"></div><div class="d"></div><div class="d"></div><div class="d"></div><div class="d"></div><div class="d"></div><div class="d"></div><div class="d"></div></div>
<div class="grw" style="top:198px"><div class="d"></div><div class="d"></div><div class="d"></div><div class="d"></div><div class="d"></div><div class="d"></div><div class="d"><i class="bar t"></i></div><div class="d"><i class="bar t"></i></div><div class="d"><i class="bar t"></i></div><div class="d"><i class="bar t"></i></div><div class="d"></div><div class="d"></div><div class="d"></div><div class="d"></div><div class="d"></div></div>
<div class="grw" style="top:231px"><div class="d"></div><div class="d"></div><div class="d"></div><div class="d"></div><div class="d"></div><div class="d"></div><div class="d"></div><div class="d"></div><div class="d"></div><div class="d"></div><div class="d"><i class="bar t"></i></div><div class="d"><i class="bar t"></i></div><div class="d"><i class="bar t"></i></div><div class="d"><i class="bar t"></i></div><div class="d"><i class="bar t"></i></div></div>
<div class="grw" style="top:264px"><div class="d"></div><div class="d"></div><div class="d"></div><div class="d"></div><div class="d"><i class="bar t"></i></div><div class="d"><i class="bar t"></i></div><div class="d"></div><div class="d"></div><div class="d"></div><div class="d"></div><div class="d"></div><div class="d"></div><div class="d"></div><div class="d"></div><div class="d"></div></div>
<div class="grw" style="top:297px"><div class="d"></div><div class="d"></div><div class="d"></div><div class="d"></div><div class="d"></div><div class="d"></div><div class="d"></div><div class="d"></div><div class="d"></div><div class="d"></div><div class="d"></div><div class="d"></div><div class="d"></div><div class="d"></div><div class="d"></div></div>
<div class="grw" style="top:330px"><div class="d"></div><div class="d"></div><div class="d"></div><div class="d"></div><div class="d"></div><div class="d"></div><div class="d"></div><div class="d"></div><div class="d"></div><div class="d"></div><div class="d"></div><div class="d"></div><div class="d"></div><div class="d"></div><div class="d"></div></div>
<div class="grw" style="top:363px"><div class="d"></div><div class="d"></div><div class="d"></div><div class="d"></div><div class="d"></div><div class="d"></div><div class="d"></div><div class="d"></div><div class="d"></div><div class="d"></div><div class="d"></div><div class="d"></div><div class="d"></div><div class="d"></div><div class="d"></div></div>
<div class="grw" style="top:396px"><div class="d"></div><div class="d"></div><div class="d"></div><div class="d"></div><div class="d"></div><div class="d"></div><div class="d"></div><div class="d"></div><div class="d"></div><div class="d"></div><div class="d"></div><div class="d"></div><div class="d"></div><div class="d"></div><div class="d"></div></div>
<div class="grw" style="top:429px"><div class="d"></div><div class="d"></div><div class="d"></div><div class="d"></div><div class="d"></div><div class="d"></div><div class="d"></div><div class="d"></div><div class="d"></div><div class="d"></div><div class="d"></div><div class="d"></div><div class="d"></div><div class="d"></div><div class="d"></div></div>
<div class="grw" style="top:462px"><div class="d"></div><div class="d"></div><div class="d"></div><div class="d"></div><div class="d"></div><div class="d"></div><div class="d"></div><div class="d"></div><div class="d"></div><div class="d"></div><div class="d"></div><div class="d"></div><div class="d"></div><div class="d"></div><div class="d"></div></div>
<div class="grw" style="top:495px"><div class="d"></div><div class="d"></div><div class="d"></div><div class="d"></div><div class="d"></div><div class="d"></div><div class="d"></div><div class="d"></div><div class="d"></div><div class="d"></div><div class="d"></div><div class="d"></div><div class="d"></div><div class="d"></div><div class="d"></div></div>
    </div>
    <!-- vertical scrollbar -->
    <div class="vsb" style="left:1598px;top:61px;width:17px;height:514px">
      <div class="arr" style="left:4px;top:2px;border-bottom:5px solid #a3a3a3;border-top:0"></div>
      <div class="thumb" style="left:2px;top:17px;width:13px;height:470px"></div>
      <div class="arr" style="left:4px;bottom:5px;border-top:5px solid #505050;border-bottom:0"></div>
    </div>
    <!-- horizontal scrollbar -->
    <div class="vsb" style="left:868px;top:575px;width:730px;height:17px">
      <div class="arr" style="left:5px;top:4px;border-right:5px solid #a3a3a3;border-left:0"></div>
      <div class="thumb" style="left:17px;top:2px;width:174px;height:13px"></div>
      <div class="arr" style="right:6px;top:4px;border-left:5px solid #505050;border-right:0"></div>
    </div>
    <div class="abs" style="left:1598px;top:575px;width:17px;height:17px;background:#dcdcdc"></div>
  </div>

  <div id="pager">
    <svg style="left:73px;top:11px" width="12" height="12" viewBox="0 0 12 12"><rect x="1" y="0" width="2.4" height="12" fill="url(#pb)"/><path d="M11 0 L11 12 L4 6 Z" fill="url(#pb)"/></svg>
    <svg style="left:95px;top:12px" width="9" height="12" viewBox="0 0 9 12"><path d="M8.5 0 L8.5 12 L1.8 6 Z" fill="url(#pb)"/></svg>
    <svg style="left:199px;top:12px" width="9" height="12" viewBox="0 0 9 12"><path d="M.5 0 L.5 12 L7.2 6 Z" fill="url(#pb)"/></svg>
    <svg style="left:217px;top:11px" width="12" height="12" viewBox="0 0 12 12"><path d="M1 0 L1 12 L8 6 Z" fill="url(#pb)"/><rect x="8.6" y="0" width="2.4" height="12" fill="url(#pb)"/></svg>
    <svg style="left:252px;top:9px" width="18" height="17" viewBox="0 0 17 16"><g fill="none" stroke="#6cbb5e" stroke-width="2.6"><path d="M3 7.2 C3.5 3.2 9 2.2 11.8 4.6"/><path d="M14 8.8 C13.5 12.8 8 13.8 5.2 11.4"/></g><path d="M9.6 6.6 L15.6 7 L14.6 1.4 Z" fill="#6cbb5e"/><path d="M7.4 9.4 L1.4 9 L2.4 14.6 Z" fill="#6cbb5e"/></svg>
    <div class="sel">200<svg style="right:5px;top:6px" width="10" height="7" viewBox="0 0 10 7"><path d="M1 1 L5 5 L9 1" fill="none" stroke="#111" stroke-width="1.8"/></svg></div>
    <div class="ps" style="left:60px"></div>
    <div class="ps" style="left:120px"></div>
    <div class="pin">1</div>
    <div class="abs" style="left:157px;top:9px;line-height:20px;font-size:13px;letter-spacing:1px">/ 1</div>
    <div class="ps" style="left:182px"></div>
    <div class="ps" style="left:242px"></div>
    <div class="ps" style="left:280px"></div>
    <div class="info">显示从1到5，总 5 条 。每页显示：200</div>
  </div>
</div>

</body></html>
